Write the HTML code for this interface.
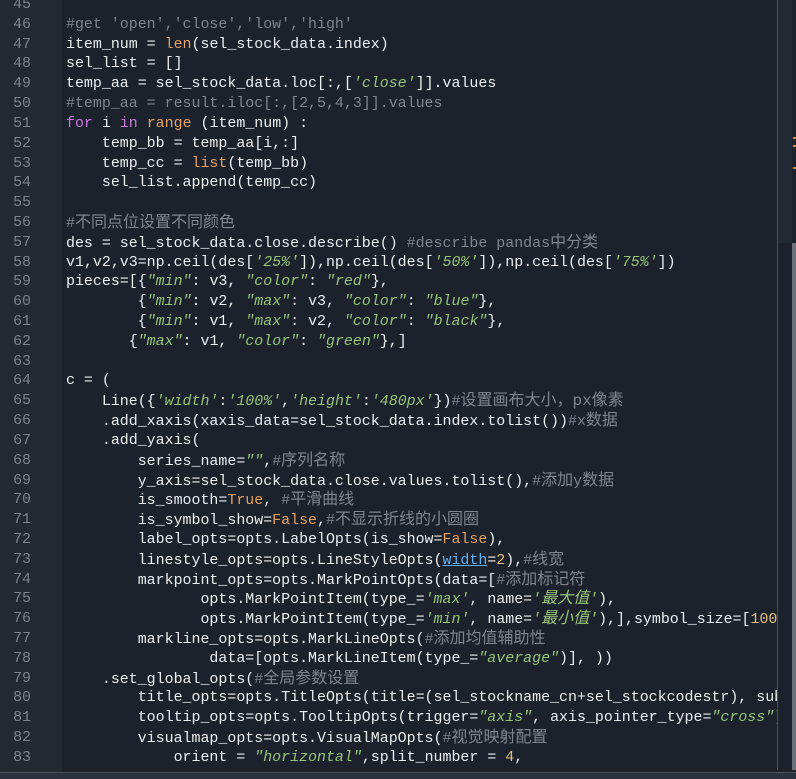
<!DOCTYPE html>
<html><head><meta charset="utf-8"><style>
html,body{margin:0;padding:0;}
body{width:796px;height:778px;background:#1b222c;position:relative;overflow:hidden;font-family:"Liberation Mono","Noto Sans CJK SC",monospace;}
#gut{position:absolute;left:0;top:0;width:62px;height:778px;background:#212933;}
#code{position:absolute;left:0;top:-5px;width:777px;overflow:hidden;}
.l{position:relative;height:19.82px;line-height:20px;white-space:pre;font-size:14.95px;color:#eceef0;}
.n{position:absolute;left:0;top:0;width:31px;text-align:right;color:#7b838d;}
.t{position:absolute;left:66px;top:0;}
.c{color:#7f858e;}
.k{color:#c678dd;}
.b{color:#e5a062;}
.s{color:#98c379;font-style:italic;}
.f{color:#e5a062;}
.d{color:#e5c07b;}
.u{color:#61afef;text-decoration:underline;}
.z{font-size:16px;}
#rule{position:absolute;left:777px;top:0;width:1px;height:770px;background:#48505b}
#mini{position:absolute;left:778px;top:0;width:14px;height:243px;background:#212933}
#thumb{position:absolute;left:792px;top:243px;width:4px;height:527px;background:#6d727a}
.o{position:absolute;left:793px;width:3px;height:2px;background:#e08a2c}
#o1{top:137px}#o2{top:145px}#o3{top:167px}
#hbar{position:absolute;left:0;top:772px;width:796px;height:6px;background:#2a323d;border-top:1px solid #4a525c}
</style></head><body>
<div id="gut"></div>
<div id="code">
<div class="l"><span class="n">45</span><span class="t"></span></div>
<div class="l"><span class="n">46</span><span class="t"><span class="c">#get 'open','close','low','high'</span></span></div>
<div class="l"><span class="n">47</span><span class="t">item_num = <span class="b">len</span>(sel_stock_data.index)</span></div>
<div class="l"><span class="n">48</span><span class="t">sel_list = []</span></div>
<div class="l"><span class="n">49</span><span class="t">temp_aa = sel_stock_data.loc[:,[<span class="s">'close'</span>]].values</span></div>
<div class="l"><span class="n">50</span><span class="t"><span class="c">#temp_aa = result.iloc[:,[2,5,4,3]].values</span></span></div>
<div class="l"><span class="n">51</span><span class="t"><span class="k">for</span> i <span class="k">in</span> <span class="b">range</span> (item_num) :</span></div>
<div class="l"><span class="n">52</span><span class="t">    temp_bb = temp_aa[i,:]</span></div>
<div class="l"><span class="n">53</span><span class="t">    temp_cc = <span class="b">list</span>(temp_bb)</span></div>
<div class="l"><span class="n">54</span><span class="t">    sel_list.append(temp_cc)</span></div>
<div class="l"><span class="n">55</span><span class="t"></span></div>
<div class="l"><span class="n">56</span><span class="t"><span class="c">#<span class="z">不同点位设置不同颜色</span></span></span></div>
<div class="l"><span class="n">57</span><span class="t">des = sel_stock_data.close.describe() <span class="c">#describe pandas<span class="z">中分类</span></span></span></div>
<div class="l"><span class="n">58</span><span class="t">v1,v2,v3=np.ceil(des[<span class="s">'25%'</span>]),np.ceil(des[<span class="s">'50%'</span>]),np.ceil(des[<span class="s">'75%'</span>])</span></div>
<div class="l"><span class="n">59</span><span class="t">pieces=[{<span class="s">"min"</span>: v3, <span class="s">"color"</span>: <span class="s">"red"</span>},</span></div>
<div class="l"><span class="n">60</span><span class="t">        {<span class="s">"min"</span>: v2, <span class="s">"max"</span>: v3, <span class="s">"color"</span>: <span class="s">"blue"</span>},</span></div>
<div class="l"><span class="n">61</span><span class="t">        {<span class="s">"min"</span>: v1, <span class="s">"max"</span>: v2, <span class="s">"color"</span>: <span class="s">"black"</span>},</span></div>
<div class="l"><span class="n">62</span><span class="t">       {<span class="s">"max"</span>: v1, <span class="s">"color"</span>: <span class="s">"green"</span>},]</span></div>
<div class="l"><span class="n">63</span><span class="t"></span></div>
<div class="l"><span class="n">64</span><span class="t">c = (</span></div>
<div class="l"><span class="n">65</span><span class="t">    Line({<span class="s">'width'</span>:<span class="s">'100%'</span>,<span class="s">'height'</span>:<span class="s">'480px'</span>})<span class="c">#<span class="z">设置画布大小，px像素</span></span></span></div>
<div class="l"><span class="n">66</span><span class="t">    .add_xaxis(xaxis_data=sel_stock_data.index.tolist())<span class="c">#x<span class="z">数据</span></span></span></div>
<div class="l"><span class="n">67</span><span class="t">    .add_yaxis(</span></div>
<div class="l"><span class="n">68</span><span class="t">        series_name=<span class="s">""</span>,<span class="c">#<span class="z">序列名称</span></span></span></div>
<div class="l"><span class="n">69</span><span class="t">        y_axis=sel_stock_data.close.values.tolist(),<span class="c">#<span class="z">添加</span>y<span class="z">数据</span></span></span></div>
<div class="l"><span class="n">70</span><span class="t">        is_smooth=<span class="f">True</span>, <span class="c">#<span class="z">平滑曲线</span></span></span></div>
<div class="l"><span class="n">71</span><span class="t">        is_symbol_show=<span class="f">False</span>,<span class="c">#<span class="z">不显示折线的小圆圈</span></span></span></div>
<div class="l"><span class="n">72</span><span class="t">        label_opts=opts.LabelOpts(is_show=<span class="f">False</span>),</span></div>
<div class="l"><span class="n">73</span><span class="t">        linestyle_opts=opts.LineStyleOpts(<span class="u">width</span>=<span class="d">2</span>),<span class="c">#<span class="z">线宽</span></span></span></div>
<div class="l"><span class="n">74</span><span class="t">        markpoint_opts=opts.MarkPointOpts(data=[<span class="c">#<span class="z">添加标记符</span></span></span></div>
<div class="l"><span class="n">75</span><span class="t">               opts.MarkPointItem(type_=<span class="s">'max'</span>, name=<span class="s">'<span class="z">最大值</span>'</span>),</span></div>
<div class="l"><span class="n">76</span><span class="t">               opts.MarkPointItem(type_=<span class="s">'min'</span>, name=<span class="s">'<span class="z">最小值</span>'</span>),],symbol_size=[<span class="d">100</span>,<span class="d">100</span>]),</span></div>
<div class="l"><span class="n">77</span><span class="t">        markline_opts=opts.MarkLineOpts(<span class="c">#<span class="z">添加均值辅助性</span></span></span></div>
<div class="l"><span class="n">78</span><span class="t">                data=[opts.MarkLineItem(type_=<span class="s">"average"</span>)], ))</span></div>
<div class="l"><span class="n">79</span><span class="t">    .set_global_opts(<span class="c">#<span class="z">全局参数设置</span></span></span></div>
<div class="l"><span class="n">80</span><span class="t">        title_opts=opts.TitleOpts(title=(sel_stockname_cn+sel_stockcodestr), subtitle=</span></div>
<div class="l"><span class="n">81</span><span class="t">        tooltip_opts=opts.TooltipOpts(trigger=<span class="s">"axis"</span>, axis_pointer_type=<span class="s">"cross"</span>),</span></div>
<div class="l"><span class="n">82</span><span class="t">        visualmap_opts=opts.VisualMapOpts(<span class="c">#<span class="z">视觉映射配置</span></span></span></div>
<div class="l"><span class="n">83</span><span class="t">            orient = <span class="s">"horizontal"</span>,split_number = <span class="d">4</span>,</span></div>
</div>
<div id="rule"></div>
<div id="mini"></div>
<div id="thumb"></div>
<div class="o" id="o1"></div>
<div class="o" id="o2"></div>
<div class="o" id="o3"></div>
<div id="hbar"></div>
</body></html>
